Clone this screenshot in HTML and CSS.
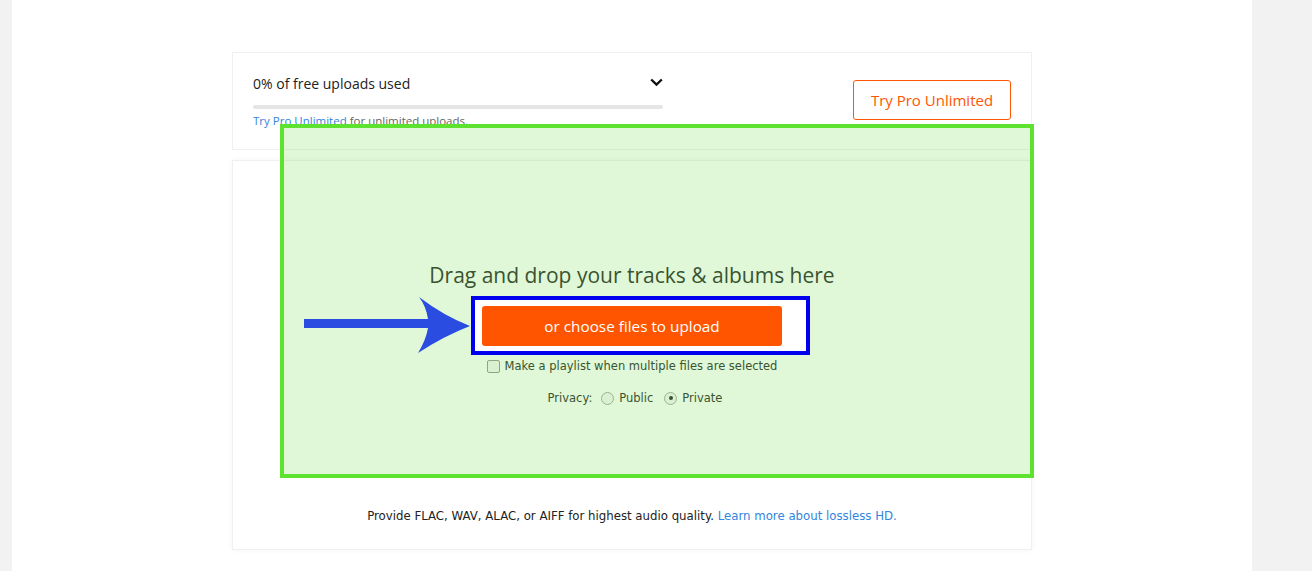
FILE: index.html
```html
<!DOCTYPE html>
<html>
<head>
<meta charset="utf-8">
<link rel="stylesheet" href="styles.css">
</head>
<body>
<div class="page">
  <div class="content">
    <div class="card usage">
      <div class="usage-left">
        <div class="usage-row">
          <span class="usage-title">0% of free uploads used</span>
          <svg class="chevron" width="13" height="9" viewBox="0 0 13 9"><path d="M1.2 1.5 L6.5 6.6 L11.8 1.5" fill="none" stroke="#111" stroke-width="2.4"/></svg>
        </div>
        <div class="bar"></div>
        <div class="usage-note"><a class="link">Try Pro Unlimited</a> for unlimited uploads.</div>
      </div>
      <button class="pro-btn">Try Pro Unlimited</button>
    </div>
    <div class="card upload">
      <h2 class="drop-title">Drag and drop your tracks &amp; albums here</h2>
      <button class="choose-btn">or choose files to upload</button>
      <label class="check-row"><span class="checkbox"></span>Make a playlist when multiple files are selected</label>
      <div class="privacy-row">
        <span>Privacy:</span>
        <span class="radio"></span><span>Public</span>
        <span class="radio on"></span><span>Private</span>
      </div>
      <p class="footer-note">Provide FLAC, WAV, ALAC, or AIFF for highest audio quality. <a class="link">Learn more about lossless HD.</a></p>
    </div>
  </div>
  <div class="green-mark"></div>
  <div class="blue-mark"></div>
  <svg class="arrow" width="170" height="62" viewBox="0 0 170 62"><path d="M0,25 L124,25 Q122,12 115,3 Q140,22 166,32 Q140,42 114,59 Q122,46 124,34 L0,34 Z" fill="#2b4ce0"/></svg>
</div>
</body>
</html>
```
FILE: styles.css
```css
html, body { margin: 0; padding: 0; }
body {
  background: #f2f2f2;
  font-family: "DejaVu Sans", "Liberation Sans", sans-serif;
  color: #333;
}
.page {
  position: relative;
  margin-left: 12px;
  width: 1240px;
  height: 571px;
  background: #fff;
  overflow: hidden;
}
.content {
  width: 800px;
  margin: 0 auto;
  padding-top: 52px;
  display: flex;
  flex-direction: column;
  gap: 10px;
}
.card {
  border: 1px solid #f0f0f0;
  box-sizing: border-box;
  background: #fff;
}
.usage {
  height: 98px;
  display: flex;
  align-items: center;
  justify-content: space-between;
  padding: 0 20px 0 20px;
}
.usage-left { width: 410px; margin-top: 0; }
.usage-row {
  display: flex;
  justify-content: space-between;
  align-items: center;
  height: 20px;
}
.usage-title {
  font-family: "Open Sans", sans-serif;
  font-size: 14px;
  color: #222;
}
.chevron { margin-top: -3px; }
.bar {
  height: 4px;
  border-radius: 2px;
  background: #e5e5e5;
  margin-top: 11px;
}
.usage-note {
  font-family: "Open Sans", sans-serif;
  font-size: 11.5px;
  color: #666;
  margin-top: 4px;
  line-height: 16px;
}
.link { color: #3385dd; text-decoration: none; }
.pro-btn {
  width: 158px;
  height: 40px;
  border: 1px solid #f50;
  border-radius: 3px;
  background: #fff;
  color: #f50;
  font-family: "Open Sans", sans-serif;
  font-size: 15px;
  margin-top: -2px;
  padding: 0;
}
.upload {
  height: 390px;
  display: flex;
  flex-direction: column;
  align-items: center;
  padding-top: 102px;
  padding-bottom: 24px;
  box-shadow: 0 0 6px rgba(0,0,0,0.04);
}
.drop-title {
  margin: 0;
  font-family: "Open Sans", sans-serif;
  font-weight: 400;
  font-size: 21px;
  line-height: 24px;
  color: #333;
}
.choose-btn {
  margin-top: 19px;
  width: 300px;
  height: 40px;
  border: none;
  border-radius: 3px;
  background: #f50;
  color: #fff;
  font-family: "Open Sans", sans-serif;
  font-size: 15.3px;
  padding: 0;
  position: relative;
  z-index: 3;
}
.check-row {
  margin-top: 11px;
  font-size: 11.5px;
  line-height: 18px;
  display: flex;
  align-items: center;
  gap: 5px;
  color: #333;
}
.checkbox {
  width: 11px;
  height: 11px;
  border: 1px solid #999;
  border-radius: 2px;
  background: #f7f7f7;
}
.privacy-row {
  margin-top: 14px;
  margin-left: 6px;
  font-size: 11.5px;
  line-height: 18px;
  display: flex;
  align-items: center;
  gap: 5px;
}
.privacy-row > span:first-child { margin-right: 4px; }
.radio {
  width: 13px;
  height: 13px;
  border: 1px solid #aaa;
  border-radius: 50%;
  background: #f7f7f7;
  box-sizing: border-box;
  position: relative;
}
.radio.on::after {
  content: "";
  position: absolute;
  left: 3.5px; top: 3.5px;
  width: 4px; height: 4px;
  border-radius: 50%;
  background: #333;
}
.privacy-row > .radio.on { margin-left: 6px; }
.footer-note {
  margin: auto 0 0 0;
  font-size: 11.75px;
  line-height: 18px;
  color: #222;
}
.green-mark {
  position: absolute;
  left: 268px;
  top: 124px;
  width: 754px;
  height: 354px;
  box-sizing: border-box;
  border: 4px solid #5de22f;
  background: rgba(90, 220, 40, 0.19);
  z-index: 1;
}
.blue-mark {
  position: absolute;
  left: 459px;
  top: 296px;
  width: 339px;
  height: 59px;
  box-sizing: border-box;
  border: 4px solid #0000ee;
  background: #fff;
  z-index: 2;
}
.arrow {
  position: absolute;
  left: 292px;
  top: 294px;
  z-index: 2;
}
```
